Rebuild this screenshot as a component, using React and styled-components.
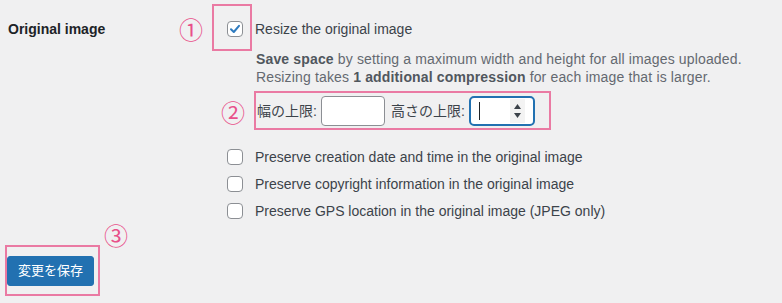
import React from 'react';
import styled, { createGlobalStyle } from 'styled-components';

const GlobalStyle = createGlobalStyle`
  body {
    margin: 0;
    background: #f0f0f1;
    color: #3c434a;
    font-family: "Liberation Sans", "Noto Sans CJK JP", sans-serif;
  }
`;

const Page = styled.div`
  padding-top: 4px;
`;

const FormTable = styled.div`
  display: grid;
  grid-template-columns: 212px 1fr;
`;

const Label = styled.div`
  padding: 16px 0 0 8px;
  font-size: 14px;
  font-weight: 700;
  line-height: 18px;
  color: #1d2327;
`;

const Field = styled.div`
  display: flex;
  flex-direction: column;
`;

const Annot = styled.div`
  position: relative;
  box-sizing: border-box;
  border: 2px solid #ea7aa3;
`;

const Marker = styled.span`
  position: absolute;
  left: ${(p) => p.$x}px;
  top: ${(p) => p.$y}px;
  font-family: "Noto Sans CJK JP", sans-serif;
  font-size: 24px;
  line-height: 1;
  color: #e8508a;
  white-space: nowrap;
`;

const OptionRow = styled.div`
  display: flex;
  align-items: flex-start;
`;

const CheckAnnot = styled(Annot)`
  width: 40px;
  height: 47px;
  padding: 15px 0 0 13px;
`;

const OptionText = styled.span`
  font-size: 14px;
  line-height: 18px;
  padding-top: ${(p) => p.$top || 0}px;
  margin-left: ${(p) => p.$gap || 0}px;
  white-space: nowrap;
`;

const Box = styled.span`
  display: flex;
  align-items: center;
  justify-content: center;
  box-sizing: border-box;
  width: 16px;
  height: 16px;
  flex-shrink: 0;
  background: #fff;
  border: 1px solid #8c8f94;
  border-radius: 4px;
`;

const Description = styled.p`
  margin: 0 0 0 44px;
  font-size: 14px;
  letter-spacing: 0.15px;
  line-height: 17.5px;
  color: #646970;
  white-space: nowrap;

  b {
    font-weight: 700;
    color: #50575e;
  }
`;

const LimitsAnnot = styled(Annot)`
  display: flex;
  align-items: center;
  width: 297px;
  height: 39px;
  margin: 5px 0 0 42px;
  padding-left: 1px;
`;

const LimitLabel = styled.span`
  font-size: 14px;
  line-height: 18px;
  margin-right: 4px;
  white-space: nowrap;
`;

const TextField = styled.span`
  box-sizing: border-box;
  width: 64px;
  height: 30px;
  margin-right: 6px;
  background: #fff;
  border: 1px solid #8c8f94;
  border-radius: 4px;
`;

const NumberField = styled.span`
  display: flex;
  align-items: center;
  box-sizing: border-box;
  width: 66px;
  height: 30px;
  padding: 0 8px;
  background: #fff;
  border: 2px solid #2271b1;
  border-radius: 5px;
`;

const Caret = styled.span`
  width: 1px;
  height: 18px;
  background: #1d2327;
`;

const Spinner = styled.span`
  display: flex;
  flex-direction: column;
  align-items: center;
  justify-content: center;
  gap: 4px;
  margin-left: auto;
  width: 15px;
  height: 24px;
  background: #f3f3f3;
`;

const CheckList = styled.div`
  margin-top: 13px;
  padding-left: 15px;
`;

const CheckRow = styled.label`
  display: flex;
  align-items: center;
  height: 27px;

  ${Box} {
    margin-right: 12px;
  }
`;

const Footer = styled.div`
  margin-top: 21px;
  padding-left: 5px;
`;

const SubmitAnnot = styled(Annot)`
  width: fit-content;
  padding: 9px 4px 8px 0;
`;

const Button = styled.button`
  display: block;
  height: 30px;
  padding: 0 10px;
  background: #2271b1;
  border: 1px solid #2271b1;
  border-radius: 3px;
  color: #fff;
  font-family: "Liberation Sans", "Noto Sans CJK JP", sans-serif;
  font-size: 13px;
  line-height: 28px;
  white-space: nowrap;
`;

const Check = () => (
  <svg width="12" height="12" viewBox="0 0 12 12">
    <path d="M2 6.2 L4.8 9 L10 2.8" fill="none" stroke="#2f7bbf" strokeWidth="2" strokeLinecap="round" strokeLinejoin="round" />
  </svg>
);

const Arrow = ({ down }) => (
  <svg width="7" height="5" viewBox="0 0 7 5">
    <path d={down ? 'M0 0 H7 L3.5 5 Z' : 'M0 5 H7 L3.5 0 Z'} fill="#3c434a" />
  </svg>
);

const options = [
  'Preserve creation date and time in the original image',
  'Preserve copyright information in the original image',
  'Preserve GPS location in the original image (JPEG only)',
];

export default function App() {
  return (
    <Page>
      <GlobalStyle />
      <FormTable>
        <Label>Original image</Label>
        <Field>
          <OptionRow>
            <CheckAnnot>
              <Marker $x={-35} $y={11}>①</Marker>
              <Box>
                <Check />
              </Box>
            </CheckAnnot>
            <OptionText $top={16} $gap={3}>Resize the original image</OptionText>
          </OptionRow>
          <Description>
            <b>Save space</b> by setting a maximum width and height for all images uploaded.
            <br />
            Resizing takes <b>1 additional compression</b> for each image that is larger.
          </Description>
          <LimitsAnnot>
            <Marker $x={-35} $y={7}>②</Marker>
            <LimitLabel>幅の上限:</LimitLabel>
            <TextField />
            <LimitLabel>高さの上限:</LimitLabel>
            <NumberField>
              <Caret />
              <Spinner>
                <Arrow />
                <Arrow down />
              </Spinner>
            </NumberField>
          </LimitsAnnot>
          <CheckList>
            {options.map((text) => (
              <CheckRow key={text}>
                <Box />
                <OptionText>{text}</OptionText>
              </CheckRow>
            ))}
          </CheckList>
        </Field>
      </FormTable>
      <Footer>
        <SubmitAnnot>
          <Marker $x={97} $y={-24}>③</Marker>
          <Button>変更を保存</Button>
        </SubmitAnnot>
      </Footer>
    </Page>
  );
}
